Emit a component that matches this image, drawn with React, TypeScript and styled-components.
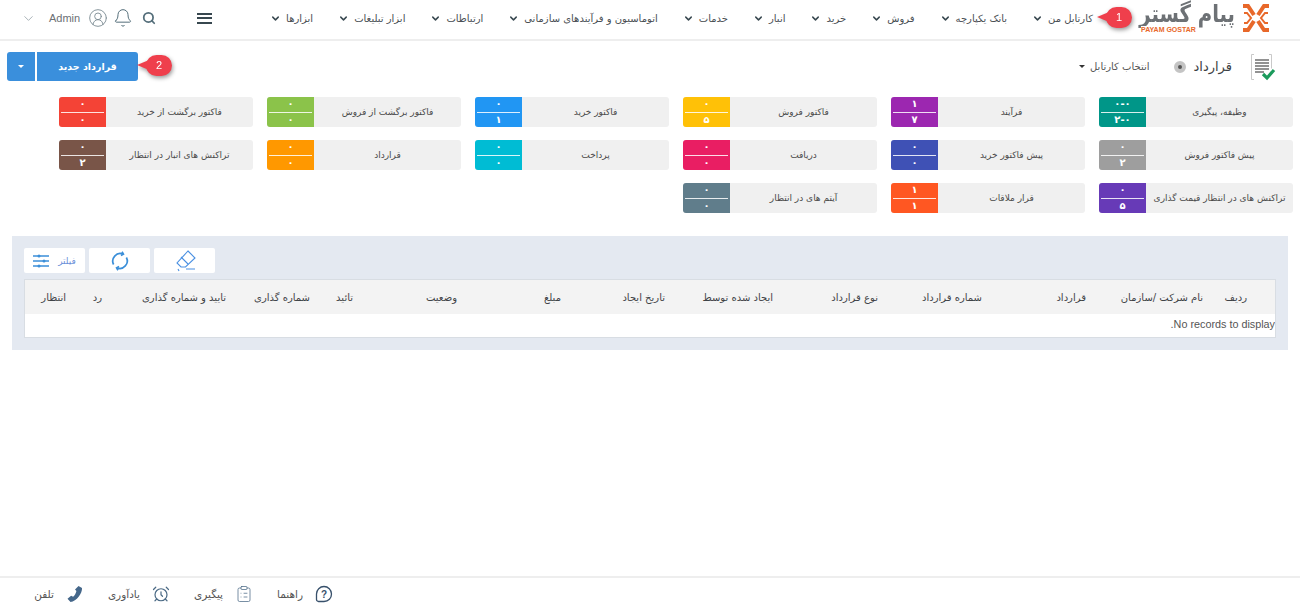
import React, { FC } from 'react';
import styled, { createGlobalStyle } from 'styled-components';
import {
  AlarmClock,
  Bell,
  ChevronDown,
  CircleUserRound,
  ClipboardList,
  Search,
} from 'lucide-react';

const NAV_ITEMS = [
  'کارتابل من',
  'بانک یکپارچه',
  'فروش',
  'خرید',
  'انبار',
  'خدمات',
  'اتوماسیون و فرآیندهای سازمانی',
  'ارتباطات',
  'ابزار تبلیغات',
  'ابزارها',
];

const CARDS = [
  { title: 'وظیفه، پیگیری', top: '۰-۰', bottom: '۲-۰', color: '#009688' },
  { title: 'فرآیند', top: '۱', bottom: '۷', color: '#9c27b0' },
  { title: 'فاکتور فروش', top: '۰', bottom: '۵', color: '#ffc107' },
  { title: 'فاکتور خرید', top: '۰', bottom: '۱', color: '#2196f3' },
  { title: 'فاکتور برگشت از فروش', top: '۰', bottom: '۰', color: '#8bc34a' },
  { title: 'فاکتور برگشت از خرید', top: '۰', bottom: '۰', color: '#f44336' },
  { title: 'پیش فاکتور فروش', top: '۰', bottom: '۲', color: '#9e9e9e' },
  { title: 'پیش فاکتور خرید', top: '۰', bottom: '۰', color: '#3f51b5' },
  { title: 'دریافت', top: '۰', bottom: '۰', color: '#e91e63' },
  { title: 'پرداخت', top: '۰', bottom: '۰', color: '#00bcd4' },
  { title: 'قرارداد', top: '۰', bottom: '۰', color: '#ff9800' },
  { title: 'تراکنش های انبار در انتظار', top: '۰', bottom: '۲', color: '#795548' },
  { title: 'تراکنش های در انتظار قیمت گذاری', top: '۰', bottom: '۵', color: '#673ab7' },
  { title: 'قرار ملاقات', top: '۱', bottom: '۱', color: '#ff5722' },
  { title: 'آیتم های در انتظار', top: '۰', bottom: '۰', color: '#607d8b' },
];

const COLUMNS = [
  { label: 'ردیف', width: 44 },
  { label: 'نام شرکت /سازمان', width: 117 },
  { label: 'قرارداد', width: 104 },
  { label: 'شماره قرارداد', width: 104 },
  { label: 'نوع قرارداد', width: 105 },
  { label: 'ایجاد شده توسط', width: 108 },
  { label: 'تاریخ ایجاد', width: 104 },
  { label: 'مبلغ', width: 104 },
  { label: 'وضعیت', width: 104 },
  { label: 'تائید', width: 43 },
  { label: 'شماره گذاری', width: 84 },
  { label: 'تایید و شماره گذاری', width: 124 },
  { label: 'رد', width: 36 },
  { label: 'انتظار', width: 40 },
];

const App: FC = () => {
  return (
    <Page dir="rtl">
      <GlobalStyle />
      <Header>
        <Logo>
          <svg width="28" height="30" viewBox="0 0 28 30" fill="none" stroke="#e8682a">
            <path d="M1 3h5l6 9M1 27h5l6-9" strokeWidth="4" />
            <path d="M27 3h-5l-6 9M27 27h-5l-6-9" strokeWidth="4" />
            <path d="M2 10h3l4 5-4 5H2" strokeWidth="2" />
            <path d="M26 10h-3l-4 5 4 5h3" strokeWidth="2" />
          </svg>
          <LogoText>
            <LogoName>پیام گستر</LogoName>
            <LogoLatin>PAYAM GOSTAR</LogoLatin>
          </LogoText>
        </Logo>
        <Nav>
          {NAV_ITEMS.map((item) => (
            <NavItem key={item}>
              {item}
              <ChevronDown size={11} strokeWidth={3.2} color="#37474f" />
            </NavItem>
          ))}
        </Nav>
        <Hamburger>
          <span />
          <span />
          <span />
        </Hamburger>
        <UserTools>
          <SearchIcon size={14} strokeWidth={3} color="#546e7a" />
          <Bell size={20} strokeWidth={1.2} color="#546e7a" />
          <CircleUserRound size={20} strokeWidth={1.1} color="#7d8c94" />
          <AdminName dir="ltr">Admin</AdminName>
          <ChevronDown size={15} strokeWidth={1} color="#78868e" />
        </UserTools>
        <Bubble $right={168} $top={7}>1</Bubble>
      </Header>

      <TitleRow>
        <TitleIcon>
          <svg width="26" height="28" viewBox="0 0 26 28" fill="none">
            <path d="M4 1.5h-2.500v25h2.500M19 1.500h2.500v14" stroke="#c9c9c9" />
            <path d="M5 7h14M5 10h14M5 13h14M5 16h14M5 19h9" stroke="#6f6f6f" strokeWidth="1.500" />
            <path d="M13 21l4 4 7-8" stroke="#1b9b5c" strokeWidth="3.200" />
          </svg>
        </TitleIcon>
        <Title>قرارداد</Title>
        <TitleCount />
        <CartableSelect>
          انتخاب کارتابل
          <Caret />
        </CartableSelect>
        <NewButton>
          <NewButtonLabel>قرارداد جدید</NewButtonLabel>
          <NewButtonToggle>
            <Caret $light />
          </NewButtonToggle>
          <Bubble $right={-34} $top={3}>2</Bubble>
        </NewButton>
      </TitleRow>

      <CardGrid>
        {CARDS.map((card) => (
          <Card key={card.title}>
            <CardTitle>{card.title}</CardTitle>
            <CardCounts $color={card.color}>
              <span>{card.top}</span>
              <CardDivider />
              <span>{card.bottom}</span>
            </CardCounts>
          </Card>
        ))}
      </CardGrid>

      <Panel>
        <PanelToolbar>
          <ToolButton>
            <svg width="24" height="24" viewBox="0 0 24 24" fill="none" stroke="#4a90e2" strokeWidth="1.100">
              <path d="M15 2l7 7-9.500 9H8l-4-4z" />
              <path d="M8 8l7 7M13 20h9M5 20l1 2" />
            </svg>
          </ToolButton>
          <ToolButton>
            <svg width="20" height="20" viewBox="0 0 20 20" fill="none" stroke="#3b8fd9" strokeWidth="1.700">
              <path d="M3.600 13.500A7.500 7.500 0 0 1 13 3.100" />
              <path d="M16.400 6.500A7.500 7.500 0 0 1 7 16.900" />
              <path d="M12 .8l1.400 2.400-2.500 1.300" />
              <path d="M8 19.200l-1.400-2.400 2.500-1.300" />
            </svg>
          </ToolButton>
          <ToolButton>
            <svg width="16" height="14" viewBox="0 0 16 14" fill="#3b8fd9" stroke="#3b8fd9">
              <path d="M0 2h16M0 7h16M0 12h16" strokeWidth="1.300" />
              <circle cx="6" cy="2" r="1.500" stroke="none" />
              <circle cx="11" cy="7" r="1.500" stroke="none" />
              <circle cx="6" cy="12" r="1.500" stroke="none" />
            </svg>
            <FilterLabel>فیلتر</FilterLabel>
          </ToolButton>
        </PanelToolbar>
        <Table>
          <TableHead>
            {COLUMNS.map((column) => (
              <HeadCell key={column.label} style={{ width: column.width }}>
                {column.label}
              </HeadCell>
            ))}
          </TableHead>
          <EmptyRow dir="rtl">No records to display.</EmptyRow>
        </Table>
      </Panel>

      <Footer>
        <FooterItem>
          <svg width="18" height="18" viewBox="0 0 18 18" fill="none" stroke="#37506b" strokeWidth="1.300">
            <path d="M9 1.500a7.500 7.500 0 0 1 7.500 7.500c0 4-3 7.500-7.500 7.500H3.500A2 2 0 0 1 1.500 14.500V9A7.500 7.500 0 0 1 9 1.500z" />
            <text x="9" y="12.500" fontSize="10" fontWeight="700" fill="#37506b" stroke="none" textAnchor="middle" fontFamily="Liberation Sans">?</text>
          </svg>
          <FooterLabel>راهنما</FooterLabel>
        </FooterItem>
        <FooterItem>
          <ClipboardList size={18} strokeWidth={1} color="#4b6a85" />
          <FooterLabel>پیگیری</FooterLabel>
        </FooterItem>
        <FooterItem>
          <AlarmClock size={18} strokeWidth={1.600} color="#4b6a85" />
          <FooterLabel>یادآوری</FooterLabel>
        </FooterItem>
        <FooterItem>
          <svg width="18" height="18" viewBox="0 0 18 18" fill="#45678a">
            <path d="M12.500 1l3.500 2c.5 5-5.500 13.500-11.500 14l-3-3.200 3.600-3 2 1c1.500-1.300 3-3.800 3.300-5.800L9 4.500z" />
          </svg>
          <FooterLabel>تلفن</FooterLabel>
        </FooterItem>
      </Footer>
    </Page>
  );
};

const GlobalStyle = createGlobalStyle`
  html, body {
    margin: 0;
    height: 100%;
    background: #fff;
    overflow: hidden;
  }
  body {
    font-family: "DejaVu Sans", "Liberation Sans", sans-serif;
  }
  #root {
    height: 100%;
  }
`;

const Page = styled.div`
  height: 100%;
  display: flex;
  flex-direction: column;
  color: #444;
`;

const Header = styled.header`
  position: relative;
  flex: none;
  height: 41px;
  box-sizing: border-box;
  display: flex;
  align-items: center;
  padding: 0 30px 3px 21px;
  border-bottom: 2px solid #eeeeee;
`;

const Logo = styled.div`
  flex: none;
  display: flex;
  align-items: center;
  gap: 7px;
`;

const LogoText = styled.div`
  width: 101px;
  height: 31px;
  position: relative;
`;

const LogoName = styled.div`
  font-size: 24px;
  line-height: 23px;
  font-weight: 700;
  color: #6d7175;
  white-space: nowrap;
  transform: scaleX(0.82);
  transform-origin: right center;
`;

const LogoLatin = styled.div`
  position: absolute;
  left: 7px;
  bottom: 0;
  font: 700 7px/8px 'Liberation Sans', sans-serif;
  color: #e8682a;
  background: #fff;
`;

const Nav = styled.nav`
  flex: none;
  margin-right: 41px;
  display: flex;
  align-items: center;
  gap: 25px;
`;

const NavItem = styled.div`
  display: flex;
  align-items: center;
  gap: 5px;
  font-size: 10px;
  color: #4a4f54;
  white-space: nowrap;
`;

const Hamburger = styled.div`
  flex: none;
  margin-right: 58px;
  width: 15px;
  display: flex;
  flex-direction: column;
  gap: 2.500px;

  span {
    height: 2px;
    background: #37474f;
  }
`;

const UserTools = styled.div`
  margin-right: auto;
  display: flex;
  align-items: center;
  gap: 5px;
`;

const SearchIcon = styled(Search)`
  margin-left: 4px;
`;

const AdminName = styled.span`
  margin: 0 3px 0 8px;
  font: 11px 'Liberation Sans', sans-serif;
  color: #6b7074;
`;

const Bubble = styled.div<{ $right: number; $top: number }>`
  position: absolute;
  right: ${(p) => p.$right}px;
  top: ${(p) => p.$top}px;
  width: 26px;
  height: 21px;
  border-radius: 11px;
  background: #ef3f4c;
  color: #fff;
  font: 11px/21px 'Liberation Sans', sans-serif;
  text-align: center;
  filter: drop-shadow(1px 2px 2px rgba(0, 0, 0, 0.4));

  &::before {
    content: '';
    position: absolute;
    left: -9px;
    top: 5px;
    border-style: solid;
    border-width: 5.500px 12px 5.500px 0;
    border-color: transparent #ef3f4c transparent transparent;
  }
`;

const TitleRow = styled.div`
  flex: none;
  height: 51px;
  display: flex;
  align-items: center;
  padding: 0 24px 0 7px;
`;

const TitleIcon = styled.div`
  display: flex;
  margin-left: 18px;
`;

const Title = styled.h1`
  margin: 0;
  font-size: 13px;
  font-weight: 400;
  color: #3c4043;
`;

const TitleCount = styled.span`
  width: 12px;
  height: 12px;
  margin-right: 8px;
  box-sizing: border-box;
  border: 4px solid #c4c4c4;
  border-radius: 50%;
  background: #555;
`;

const CartableSelect = styled.div`
  margin-right: 24px;
  display: flex;
  align-items: center;
  gap: 5px;
  font-size: 10px;
  color: #555;
`;

const Caret = styled.i<{ $light?: boolean }>`
  width: 0;
  height: 0;
  border-style: solid;
  border-width: 3.500px 3.500px 0;
  border-color: ${(p) => (p.$light ? '#fff' : '#333')} transparent transparent;
`;

const NewButton = styled.div`
  position: relative;
  margin-right: auto;
  width: 131px;
  height: 29px;
  display: flex;
  gap: 2px;
  color: #fff;
`;

const NewButtonLabel = styled.div`
  flex: 1;
  border-radius: 0 3px 3px 0;
  background: #3a8fdc;
  font-size: 9.500px;
  font-weight: 700;
  line-height: 29px;
  text-align: center;
`;

const NewButtonToggle = styled.div`
  width: 28px;
  border-radius: 3px 0 0 3px;
  background: #3a8fdc;
  display: flex;
  align-items: center;
  justify-content: center;
`;

const CardGrid = styled.div`
  flex: none;
  margin-top: 5px;
  padding: 0 7px;
  display: grid;
  grid-template-columns: repeat(6, 194px);
  grid-auto-rows: 30px;
  gap: 13px 14px;
`;

const Card = styled.div`
  display: flex;
  border-radius: 3px;
  background: #f0f0f0;
  overflow: hidden;
`;

const CardTitle = styled.div`
  flex: 1;
  align-self: center;
  font-size: 9px;
  text-align: center;
  color: #4a4a4a;
  white-space: nowrap;
`;

const CardCounts = styled.div<{ $color: string }>`
  flex: none;
  width: 47px;
  box-sizing: border-box;
  padding: 0 2px;
  display: flex;
  flex-direction: column;
  align-items: stretch;
  justify-content: space-between;
  background: ${(p) => p.$color};
  color: #fff;
  font-size: 10px;
  font-weight: 700;
  line-height: 14px;
  text-align: center;
`;

const CardDivider = styled.i`
  display: block;
  height: 1px;
  flex: none;
  background: rgba(255, 255, 255, 0.85);
`;

const Panel = styled.section`
  flex: none;
  margin: 23px 12px 0;
  box-sizing: border-box;
  height: 114px;
  padding: 12px 12px 0;
  background: #e4e9f1;
`;

const PanelToolbar = styled.div`
  display: flex;
  flex-direction: row-reverse;
  justify-content: flex-end;
  gap: 4px;
  direction: ltr;
  height: 25px;
`;

const ToolButton = styled.button`
  width: 61px;
  height: 25px;
  padding: 0;
  border: 0;
  border-radius: 2px;
  background: #fff;
  display: flex;
  align-items: center;
  justify-content: center;
  gap: 9px;
`;

const FilterLabel = styled.span`
  font: 9px 'DejaVu Sans', sans-serif;
  color: #6a8fd8;
`;

const Table = styled.div`
  margin-top: 6px;
  height: 59px;
  box-sizing: border-box;
  border: 1px solid #d8dde3;
  background: #fff;
`;

const TableHead = styled.div`
  height: 34px;
  padding-right: 28px;
  display: flex;
  align-items: center;
  background: #f3f3f3;
`;

const HeadCell = styled.div`
  flex: none;
  font-size: 10px;
  color: #3f4347;
  white-space: nowrap;
`;

const EmptyRow = styled.div`
  height: 23px;
  overflow: hidden;
  font: 10.800px/21px 'Liberation Sans', sans-serif;
  color: #555;
  white-space: nowrap;
`;

const Footer = styled.footer`
  margin-top: auto;
  flex: none;
  height: 34px;
  box-sizing: border-box;
  padding-right: 967px;
  display: flex;
  align-items: center;
  gap: 24px;
  border-top: 2px solid #eeeeee;
`;

const FooterItem = styled.div`
  display: flex;
  align-items: center;
  gap: 12px;
`;

const FooterLabel = styled.span`
  font-size: 10.500px;
  color: #555;
`;

export default App;
